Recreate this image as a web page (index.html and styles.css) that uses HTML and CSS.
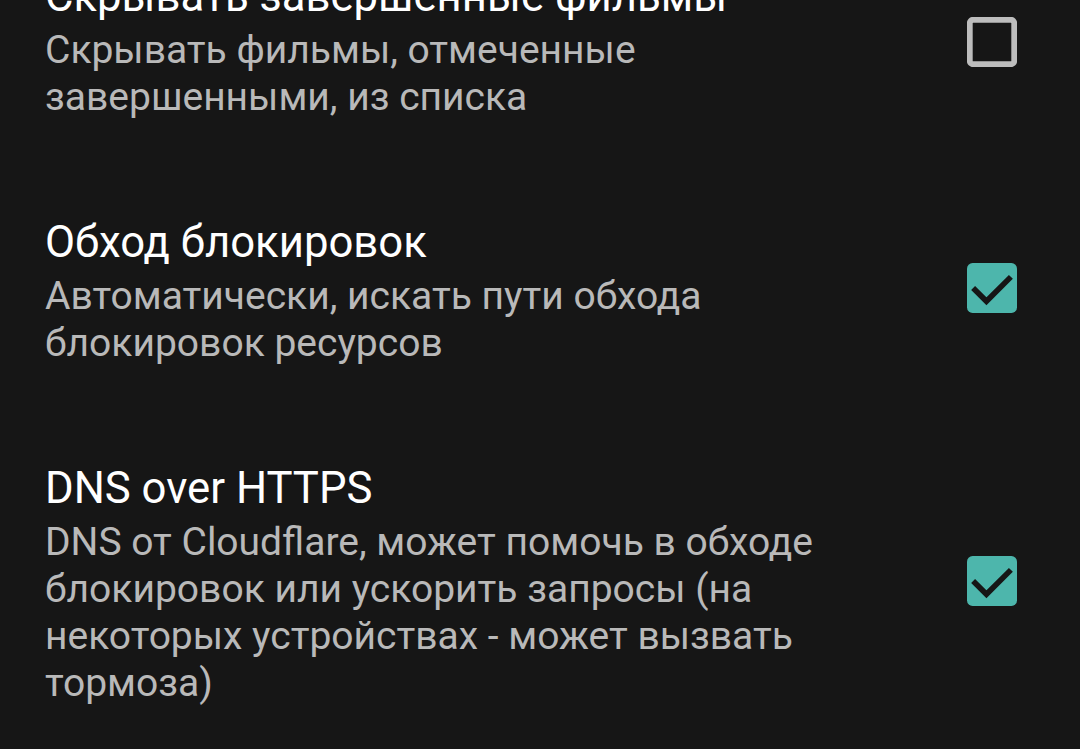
FILE: index.html
```html
<!DOCTYPE html>
<html lang="ru">
<head>
    <meta charset="UTF-8">
    <meta name="viewport" content="width=device-width, initial-scale=1.0">
    <title>Настройки</title>
    <link rel="stylesheet" href="styles.css">
</head>
<body>
    <div class="pref-list">
        <div class="pref-item">
            <div class="pref-text">
                <div class="pref-title">Скрывать завершенные фильмы</div>
                <div class="pref-summary">Скрывать фильмы, отмеченные завершенными, из списка</div>
            </div>
            <div class="pref-widget">
                <svg class="checkbox" viewBox="0 0 18 18">
                    <rect x="1" y="1" width="16" height="16" rx="1.2" fill="none" stroke="#bdbdbd" stroke-width="2.1"/>
                </svg>
            </div>
        </div>

        <div class="pref-item">
            <div class="pref-text">
                <div class="pref-title">Обход блокировок</div>
                <div class="pref-summary">Автоматически, искать пути обхода блокировок ресурсов</div>
            </div>
            <div class="pref-widget">
                <svg class="checkbox" viewBox="0 0 18 18">
                    <rect x="0" y="0" width="18" height="18" rx="2" fill="#4db6ac"/>
                    <polyline points="2.2,9 7,13.8 15.8,5" fill="none" stroke="#161616" stroke-width="2"/>
                </svg>
            </div>
        </div>

        <div class="pref-item">
            <div class="pref-text">
                <div class="pref-title">DNS over HTTPS</div>
                <div class="pref-summary">DNS от Cloudflare, может помочь в обходе блокировок или ускорить запросы (на некоторых устройствах - может вызвать тормоза)</div>
            </div>
            <div class="pref-widget">
                <svg class="checkbox" viewBox="0 0 18 18">
                    <rect x="0" y="0" width="18" height="18" rx="2" fill="#4db6ac"/>
                    <polyline points="2.2,9 7,13.8 15.8,5" fill="none" stroke="#161616" stroke-width="2"/>
                </svg>
            </div>
        </div>
    </div>
</body>
</html>
```

FILE: styles.css
```css
html, body {
    height: 100%;
}
body {
    font-family: Roboto, "Liberation Sans", sans-serif;
    background-color: #161616;
    margin: 0;
    padding: 0;
    overflow: hidden;
}
.pref-list {
    margin-top: -77px;
}
.pref-item {
    display: flex;
    align-items: center;
    padding: 48px 63px 48px 45px;
}
.pref-text {
    flex: 1;
    min-width: 0;
}
.pref-title {
    color: #ffffff;
    font-size: 43.7px;
    line-height: 50px;
    white-space: nowrap;
}
.pref-summary {
    color: #b9b9b9;
    font-size: 39px;
    line-height: 47px;
    margin-top: 6px;
}
.pref-widget {
    padding-left: 97px;
    margin-bottom: 8px;
}
.checkbox {
    display: block;
    width: 50px;
    height: 50px;
}
```
